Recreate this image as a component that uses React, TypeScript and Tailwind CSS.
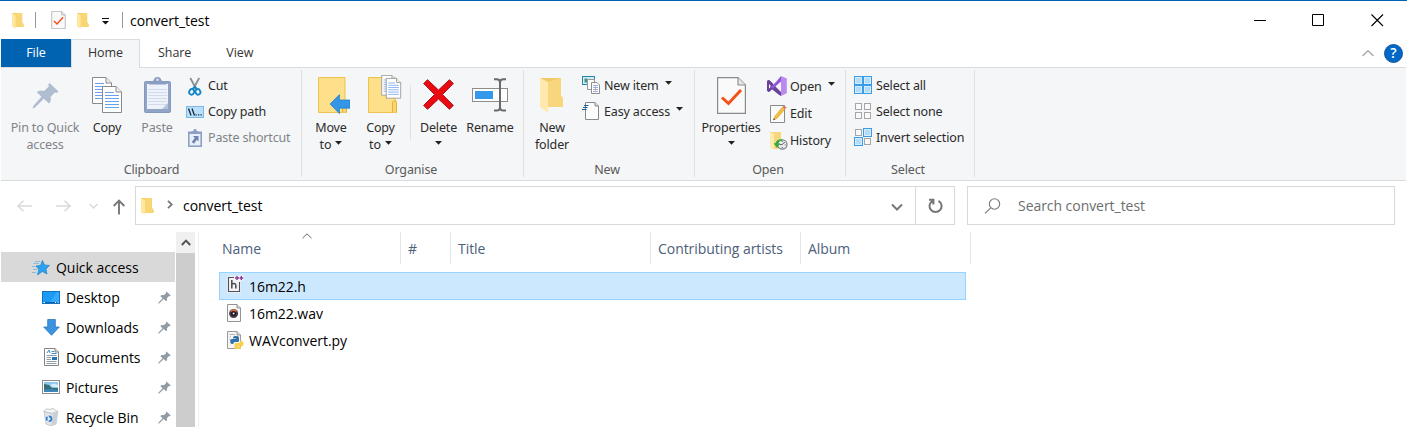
import React from "react";

type IconProps = { className?: string };

const Folder = ({ className = "" }: IconProps) => (
  <svg className={`shrink-0 ${className}`} viewBox="0 0 13 18">
    <path d="M0 1H11V11L12.5 13V16H4L0 14Z" fill="#f3c960" />
    <path d="M4 1H11V11L12.5 13V16H4Z" fill="#f8d675" />
    <path d="M0 1L4 3V17.6L0 15.5Z" fill="#ffe7a0" />
  </svg>
);

const CheckDoc = ({ className = "" }: IconProps) => (
  <svg className={`shrink-0 ${className}`} viewBox="0 0 29 37">
    <path d="M.6.6H21L28.4 8V36.4H.6Z" fill="#fafafa" stroke="#8b8b8b" strokeWidth="1.2" />
    <path d="M21 .6V8H28.4" fill="#e6e6e6" stroke="#8b8b8b" strokeWidth="1.1" />
    <path d="M5 20.5L11.5 26.5L24 13" fill="none" stroke="#f4511a" strokeWidth="3" />
  </svg>
);

const Pin = ({ className = "" }: IconProps) => (
  <svg className={`shrink-0 ${className}`} viewBox="0 0 27 27" fill="currentColor">
    <path d="M17.5 1L26.5 9.5L24.5 11L22.8 10.5L18.5 15C19.5 18 18.6 20 17 21.5L11.8 16.8L3 25.5L0.5 26.5L1.2 24L9.5 14.8L4.8 10.2C7 8.2 9.5 8 12 9L16.8 4.5L16.3 2.5Z" />
  </svg>
);

const Page = ({ x, y, stroke = "#8a8a8a" }: { x: number; y: number; stroke?: string }) => (
  <g transform={`translate(${x} ${y})`}>
    <path d="M.5.5H14L19.5 6V26.5H.5Z" fill="#fff" stroke={stroke} />
    <path d="M14 .5V6H19.5" fill="#eee" stroke={stroke} />
    <path d="M3 6.5H12M3 9.5H17M3 12.5H17M3 15.5H17M3 18.5H17M3 21.5H17" stroke="#6ba0ef" />
  </g>
);

const CopyIcon = () => (
  <svg className="h-9 w-[30px]" viewBox="0 0 30 36">
    <Page x={0} y={0} />
    <Page x={10} y={9} />
  </svg>
);

const PasteIcon = () => (
  <svg className="h-9 w-[27px]" viewBox="0 0 27 36">
    <rect x=".5" y="4.5" width="26" height="31" rx="1" fill="#92a4c6" stroke="#8598bd" />
    <path d="M3 7H24V32H3Z" fill="#eef2fa" />
    <path d="M4 12.5H23M4 15.5H23M4 18.5H23M4 21.5H23M4 24.5H23M4 27.5H23" stroke="#d3dbeb" />
    <path d="M18 32L24 26V32Z" fill="#b5c2da" />
    <path d="M5 7.5V5.5L9.5 3.5C10 1 11.5 0 13.5 0S17 1 17.5 3.5L22 5.5V7.5Z" fill="#8b9dc2" />
    <circle cx="13.5" cy="2.8" r="1.2" fill="#dfe6f2" />
  </svg>
);

const CutIcon = () => (
  <svg className="h-[19px] w-[14px] shrink-0" viewBox="0 0 14 19" fill="none">
    <path d="M2.3 1L8.5 12.5M11.2 1L5 12.5" stroke="#8d9299" strokeWidth="1.9" />
    <ellipse cx="3.7" cy="14.9" rx="2.4" ry="2.8" stroke="#1788c7" strokeWidth="2" transform="rotate(25 3.7 14.9)" />
    <ellipse cx="9.9" cy="14.9" rx="2.4" ry="2.8" stroke="#1788c7" strokeWidth="2" transform="rotate(-25 9.9 14.9)" />
    <path d="M4.5 12L6.8 9.8L9 12" stroke="#1788c7" strokeWidth="1.8" />
  </svg>
);

const PathIcon = () => (
  <svg className="h-3 w-[18px] shrink-0" viewBox="0 0 18 12">
    <rect x=".5" y=".5" width="17" height="11" fill="#b9e0fb" stroke="#7db9e4" />
    <path d="M2.5 2.5L5 9.5M6 2.5L8.5 9.5" stroke="#1a2a3a" strokeWidth="1.3" />
    <path d="M9.5 8.8H10.8M12 8.8H13.3M14.5 8.8H15.8" stroke="#1a2a3a" strokeWidth="1.3" />
  </svg>
);

const PasteShortcutIcon = () => (
  <svg className="h-[18px] w-[14px] shrink-0" viewBox="0 0 14 18">
    <rect x="0" y="2.5" width="14" height="15.5" fill="#8fa2c5" />
    <path d="M1.6 5H12.4V16.4H1.6Z" fill="#e9eef8" />
    <path d="M3 5V3L5.3 2C5.6.6 6.1 0 7 0S8.4.6 8.7 2L11 3V5Z" fill="#8b9dc2" />
    <path d="M5 7H10.5V12.5L8.7 10.8L6 14.8L3.8 13L6.8 8.9Z" fill="#6d82ad" />
  </svg>
);

const BigFolder = () => (
  <>
    <path d="M.5.5H27V23L28.5 24.5V35.5H.5Z" fill="#ffe08a" stroke="#ecc34c" />
    <path d="M24.5 35V25.5C24.5 23.5 28.5 23.5 28.5 25.5V35.5" fill="#f9d56f" stroke="#e2b336" />
  </>
);

const MoveIcon = () => (
  <svg className="h-[37px] w-8" viewBox="0 0 32 37">
    <BigFolder />
    <path d="M12 27L21.5 17.5V23H32V31.2H21.5V36.7Z" fill="#3596e8" stroke="#1f7ccb" strokeWidth=".7" />
  </svg>
);

const CopyToIcon = () => (
  <svg className="h-[39px] w-[34px]" viewBox="0 0 34 39">
    <g transform="translate(0 2)"><BigFolder /></g>
    <g transform="translate(13.3 0) scale(.76)">
      <Page x={0} y={0} />
      <Page x={6} y={4} />
    </g>
  </svg>
);

const DeleteIcon = () => (
  <svg className="h-[31px] w-[31px]" viewBox="0 0 31 31">
    <path d="M4.5.7L15.5 11L26.5.7L30.3 4.6L19.5 15.5L30.3 26.4L26.5 30.3L15.5 20L4.5 30.3L.7 26.4L11.5 15.5L.7 4.6Z" fill="#ea0b12" stroke="#a9121a" />
  </svg>
);

const RenameIcon = () => (
  <svg className="h-[34px] w-9" viewBox="0 0 36 34">
    <rect x=".5" y="10.5" width="35" height="13" fill="#fff" stroke="#8c8c8c" />
    <rect x="3" y="13" width="18" height="8" fill="#3499ea" />
    <path d="M22 1.2H24.5C27 1.2 28 2.6 28 4.5V29C28 31.3 27 32.6 24.5 32.6H22M34 1.2H31.5C29 1.2 28 2.6 28 4.5M34 32.6H31.5C29 32.6 28 31.3 28 29" fill="none" stroke="#6a6a6a" strokeWidth="2" />
  </svg>
);

const NewFolderIcon = () => (
  <svg className="h-[35px] w-6" viewBox="0 0 24 35">
    <path d="M0 0H21V18L23 20V29H6L0 20Z" fill="#f0ca6a" />
    <path d="M8 4L21 0V18L23 20V29H8Z" fill="#f8d67d" />
    <path d="M0 0L8 4V34.5L0 29Z" fill="#ffe9ad" />
  </svg>
);

const NewItemIcon = () => (
  <svg className="h-[18px] w-[18px] shrink-0" viewBox="0 0 18 18">
    <rect x=".5" y=".5" width="12" height="8" fill="#d3ecfb" stroke="#2c83ab" />
    <rect x="2.5" y="2.5" width="3" height="4" fill="#3f9777" />
    <path d="M5.5 3.5H12.5V13.5H5.5Z" fill="#fbfbfb" stroke="#9a9a9a" />
    <path d="M9.5 6.5H15L17.5 9V17.5H9.5Z" fill="#fff" stroke="#8f8f8f" />
    <path d="M11 9.5H16M11 11.5H16M11 13.5H16M11 15.5H16" stroke="#88b5ea" />
    <path d="M13.5 9V16" stroke="#df9a9a" strokeWidth=".8" />
  </svg>
);

const EasyIcon = () => (
  <svg className="h-[18px] w-[17px] shrink-0" viewBox="0 0 17 18">
    <path d="M3.5.5H13L16.5 4V17.5H3.5Z" fill="#fdfdfd" stroke="#8a8a8a" />
    <path d="M13 .5V4H16.5" fill="#ddd" stroke="#8a8a8a" />
    <path d="M2 3.5H6.5M1 5.5H5.5M0 7.5H4.5" stroke="#1e5f96" strokeWidth="1.1" />
  </svg>
);

const StudioIcon = () => (
  <svg className="h-5 w-5 shrink-0" viewBox="0 0 20 20">
    <path d="M0 5L2 4L14 16L14 20L11.5 18.5L3.5 12V8Z" fill="#6b4299" />
    <path d="M14 0L19.8 2.5V17.3L14 20Z" fill="#b98af0" />
    <path d="M14 0V5.5L2 16L0 14.8L9 6Z" fill="#9155d8" />
    <path d="M0 5L2 4L6 7.5L3.7 9.6L2 8V13L3.7 11L5.5 12.5L2 16L0 14.8Z" fill="#68419a" />
  </svg>
);

const EditIcon = () => (
  <svg className="h-[19px] w-[17px] shrink-0" viewBox="0 0 17 19">
    <path d="M.5 1.5H14.5V18.5H.5Z" fill="#fafafa" stroke="#8a8a8a" />
    <path d="M3.5 16L5 12L12.5 3L15 5L7.2 14.2Z" fill="#f5bd3a" stroke="#d8951d" strokeWidth=".5" />
    <path d="M12.5 3L14 1.3L16.7 3.4L15 5Z" fill="#d9766e" />
    <path d="M3.2 16.3L3.9 14.2L5.3 15.3Z" fill="#444" />
  </svg>
);

const HistoryIcon = () => (
  <svg className="h-[18px] w-[18px] shrink-0" viewBox="0 0 18 18">
    <path d="M0 0H11V12L8 17H3L0 15Z" fill="#f8d77e" />
    <path d="M0 0L4 2V17L0 15Z" fill="#ffebb0" />
    <circle cx="12.3" cy="12.5" r="4.7" fill="#e8ebec" stroke="#7d8587" strokeWidth="1.2" />
    <path d="M12.3 12.5L14.8 10M12.3 12.5H9.5M12.3 9V10M15.6 12.8H14.8M12.3 16V15" stroke="#555" strokeWidth=".9" />
    <path d="M12 7.2C8 6.8 5.8 9 5.6 11.3H3.6L7 16L10 11.3H8.3C8.5 9.5 9.8 8.5 12 9Z" fill="#2fae3c" />
  </svg>
);

const GridIcon = ({ on }: { on: boolean[] }) => {
  const all = on.every(Boolean);
  return (
    <svg className="h-[18px] w-[18px] shrink-0" viewBox="0 0 18 18">
      {all && <rect x=".5" y=".5" width="17" height="17" fill="#3a9ce8" stroke="#3a9ce8" />}
      {on.map((v, i) => {
        const x = (i % 2) * 9;
        const y = Math.floor(i / 2) * 9;
        return v ? (
          <g key={i}>
            <rect x={x + 0.5} y={y + 0.5} width="8" height="8" fill="#d5edfd" stroke="#3a9ce8" />
            <rect x={x + 2} y={y + 2} width="5" height="5" fill="#b4dcfa" />
          </g>
        ) : (
          <rect key={i} x={x + 1.5} y={y + 1.5} width="6" height="6" fill="#fafafa" stroke="#a6a6a6" />
        );
      })}
    </svg>
  );
};

const Caret = ({ className = "" }: IconProps) => (
  <svg className={`inline-block h-1 w-[7px] shrink-0 ${className}`} viewBox="0 0 7 4"><path d="M0 0H7L3.5 3.8Z" fill="#222" /></svg>
);

const T = ({ children }: { children: React.ReactNode }) => <span className="whitespace-pre">{children}</span>;

const Big = ({ w, icon, a, b, caret, muted }: { w: string; icon: React.ReactNode; a: string; b?: string; caret?: boolean; muted?: boolean }) => (
  <div className={`flex shrink-0 flex-col items-center ${w} ${muted ? "text-[#808489]" : "text-[#2b2b2b]"}`}>
    <div className="flex h-[51px] items-center pt-[3px]">{icon}</div>
    <div className="h-[17px] leading-[17px]"><T>{a}</T></div>
    <div className="flex h-[17px] items-center gap-1 leading-[17px]">{b && <T>{b}</T>}{caret && <Caret className="-mt-1" />}</div>
  </div>
);

const Small = ({ icon, label, caret, muted, wide }: { icon: React.ReactNode; label: string; caret?: boolean; muted?: boolean; wide?: boolean }) => (
  <div className={`flex h-[26px] items-center ${muted ? "text-[#808489]" : "text-[#2b2b2b]"}`}>
    <div className={`flex shrink-0 items-center ${wide ? "w-[23px]" : "w-[22px]"}`}>{icon}</div>
    <T>{label}</T>
    {caret && <Caret className="-mt-1.5 ml-[6px]" />}
  </div>
);

const Group = ({ w, title, shift = "", children }: { w: string; title: string; shift?: string; children: React.ReactNode }) => (
  <div className={`relative flex shrink-0 flex-col ${w}`}>
    <div className="flex h-[93px]">{children}</div>
    <div className={`text-center leading-[17px] text-[#5a5a5a] ${shift}`}><T>{title}</T></div>
    <div className="absolute right-0 top-0.5 h-[107px] w-px bg-[#e0e1e3]" />
  </div>
);

const StarIcon = () => (
  <svg className="h-[17px] w-[18px]" viewBox="0 0 18 17">
    <path d="M10.5 1.5L12.5 6L17.5 6.4L14 10L15 15L10.3 12.5L5.5 16L6.8 10.6L4 7L8.6 6.3Z" fill="#2ba2ef" stroke="#1879c1" strokeWidth=".6" />
    <path d="M3 2.5H8.5M1.5 4.5H7M0 7.5H3.5M1 10.5H5M0 13.5H4" stroke="#6fb5e2" strokeWidth=".8" />
  </svg>
);
const DesktopIcon = () => (
  <svg className="h-[13px] w-[18px]" viewBox="0 0 18 13">
    <rect x=".5" y=".5" width="17" height="12" fill="#1b9bf5" stroke="#1273c4" />
    <path d="M8 11L15 1H17V11Z" fill="#35aafa" />
    <path d="M1 11.5H17" stroke="#0f5ea3" /><path d="M1.5 11.5H3M13 11.5H14M15.5 11.5H16.5" stroke="#fff" />
  </svg>
);
const DownIcon = () => (
  <svg className="h-[17px] w-[17px]" viewBox="0 0 17 17"><path d="M4.7.5H12.3V8H16.3L8.5 16.3L.7 8H4.7Z" fill="#3c93e0" stroke="#2476c2" strokeWidth=".8" /></svg>
);
const DocIcon = () => (
  <svg className="h-[18px] w-[15px]" viewBox="0 0 15 18">
    <path d="M.5.5H11L14.5 4V17.5H.5Z" fill="#fff" stroke="#838383" /><path d="M11 .5V4H14.5" fill="#ddd" stroke="#838383" />
    <path d="M3 5L5 2L6 5M7.5 3.5H10M7.5 5.5H12.5" fill="none" stroke="#3992d2" />
    <path d="M2.5 7.5H12.5M2.5 9.5H7M2.5 11.5H7M2.5 13.5H12.5M2.5 15.5H12.5" stroke="#8b9aa5" /><rect x="8" y="9" width="5" height="3" fill="#2875ae" />
  </svg>
);
const PicIcon = () => (
  <svg className="h-3.5 w-[18px]" viewBox="0 0 18 14">
    <rect x=".5" y=".5" width="17" height="13" fill="#fff" stroke="#8b8b8b" /><rect x="2" y="2" width="14" height="10" fill="#8cc7f2" />
    <path d="M2 4L7 5L10 8H16V12H2Z" fill="#376c74" /><path d="M2 9.5L9 9L16 10V12H2Z" fill="#3d87bd" /><path d="M8 5L12 3.5L16 5V7H11Z" fill="#d8effb" />
  </svg>
);
const BinIcon = () => (
  <svg className="h-[18px] w-[16px]" viewBox="0 0 16 18">
    <path d="M1 3L14.8 3.8L13 16L8 17.8L3 16Z" fill="#e1e5e8" stroke="#b5bcc2" strokeWidth=".7" />
    <path d="M1 3L4 .8L7 1.5L10 .3L12 2L15 3.7L9.5 5.2L1.5 4Z" fill="#f5f6f7" stroke="#a8b0b6" strokeWidth=".7" />
    <path d="M9.5 5.2L8.5 17.5L13 16L14.7 4Z" fill="#cbd1d6" />
    <circle cx="6" cy="10.7" r="2.4" fill="none" stroke="#2c7fd0" strokeWidth="1.7" strokeDasharray="3.6 1.4" />
  </svg>
);

const side: [string, React.ReactNode][] = [
  ["Desktop", <DesktopIcon />], ["Downloads", <DownIcon />], ["Documents", <DocIcon />], ["Pictures", <PicIcon />], ["Recycle Bin", <BinIcon />],
];

const HIcon = () => (
  <svg className="mb-1 h-[18px] w-[17px]" viewBox="0 0 17 18">
    <path d="M1.5 2.5H12.5V16.5H1.5Z" fill="#f4f4f6" stroke="#f4f4f6" strokeWidth="2.4" />
    <path d="M12 .5H17V5.5H8V1.5Z" fill="#f4f4f6" />
    <path d="M7 2.5H1.5V16.5H12.5V7" fill="none" stroke="#505055" strokeWidth="1.1" />
    <path d="M4.8 5V13.5M4.8 9.6C6 8.2 8.8 8 8.8 10.3V13.5" fill="none" stroke="#505055" strokeWidth="1.6" />
    <path d="M10 1V5M8 3H12M14.3 1V5M12.5 3H16.3" stroke="#8a3c9c" strokeWidth="1.4" />
  </svg>
);
const WavIcon = () => (
  <svg className="mb-0.5 h-[18px] w-[14px]" viewBox="0 0 14 18">
    <path d="M.5.5H10L13.5 4V17.5H.5Z" fill="#fafafa" stroke="#939393" /><path d="M10 .5V4H13.5" fill="#ddd" stroke="#939393" />
    <circle cx="6.6" cy="9.5" r="4.5" fill="#4b3a4c" /><path d="M3 7A4.4 4.4 0 0 1 10 7L6.6 9.5Z" fill="#d9743f" /><circle cx="6.6" cy="9.5" r="2.6" fill="#1f1b22" /><circle cx="6.6" cy="9.5" r="1" fill="#e8e8e8" />
  </svg>
);
const PyIcon = () => (
  <svg className="mb-0.5 h-[18px] w-[17px]" viewBox="0 0 17 18">
    <path d="M.5.5H10L13.5 4V17.5H.5Z" fill="#f5f5f5" stroke="#9b9b9b" /><path d="M10 .5V4H13.5" fill="#ddd" stroke="#939393" />
    <path d="M2.5 3.5H8M2.5 6H4M2.5 8.5H3.5" stroke="#b5b5b5" />
    <path d="M6 7C6 5.5 7 5 9 5S12 5.5 12 7V9.5C12 10.5 11.3 11 10.5 11H8C6.8 11 6.3 11.8 6.3 13H5C3.7 13 3.2 11.7 3.2 10.3S3.8 8 5 8H9V7.5H6Z" fill="#3473a8" />
    <path d="M14 17C14 17.7 12.8 18 10.8 18S7.5 17.5 7.5 16.5V13.5C7.5 12.5 8.2 12 9 12H11.5C12.6 12 13.2 11.2 13.2 10H14.5C15.8 10 16.5 11.2 16.5 12.6S16 15.3 14.8 15.3H10.8V15.8H14Z" fill="#fbd24b" />
  </svg>
);

const Col = ({ w, label }: { w: string; label: string }) => (
  <div className={`flex h-8 shrink-0 items-center border-r border-[#e5e5e5] pl-[7px] ${w}`}><T>{label}</T></div>
);

export default function App() {
  return (
    <div className="flex h-[427px] w-[1407px] flex-col overflow-hidden border-t border-[#0063b1] bg-white font-['Open_Sans',sans-serif] text-[14px] tracking-[-0.05px] text-black">
      <header className="flex h-[38px] shrink-0 items-center pl-3">
        <Folder className="h-[17px] w-3" />
        <div className="ml-[11px] h-4 w-px bg-[#999]" />
        <CheckDoc className="ml-[15px] h-[18px] w-[15px]" />
        <Folder className="ml-[11px] h-[17px] w-3" />
        <svg className="ml-[13px] mt-0.5 h-2 w-[7px]" viewBox="0 0 7 8"><path d="M0 1.5H7" stroke="#111" /><path d="M0 4H7L3.5 7.5Z" fill="#111" /></svg>
        <div className="ml-[13px] h-4 w-px bg-[#999]" />
        <div className="ml-[7px]"><T>convert_test</T></div>
        <svg className="ml-auto mr-[23px] h-[13px] w-[130px]" viewBox="0 0 130 13" fill="none" stroke="#000"><path d="M0 6.5H12" /><path d="M58.5.5H69.5V11.5H58.5Z" /><path d="M117.5.5L129 12M129 .5L117.5 12" strokeWidth="1.1" /></svg>
      </header>

      <nav className="flex h-7 shrink-0 pl-px text-[12.5px] text-[#333]">
        <div className="flex w-[70px] items-center justify-center bg-[#0063b1] text-white"><T>File</T></div>
        <div className="relative z-10 -mb-px flex w-[69px] items-center justify-center border border-b-0 border-[#dadbdc] bg-[#f5f6f7] pb-px"><T>Home</T></div>
        <div className="flex items-center pl-[18px]"><T>Share</T></div>
        <div className="flex items-center pl-[35px]"><T>View</T></div>
        <div className="ml-auto flex items-center pr-1">
          <svg className="mr-2.5 h-[7px] w-3" viewBox="0 0 12 7" fill="none" stroke="#a5a5a5" strokeWidth="1.3"><path d="M.5 6L6 .8L11.5 6" /></svg>
          <div className="flex size-[19px] items-center justify-center rounded-full border border-[#1459a0] bg-[#0067c6] text-[14px] font-semibold leading-none text-white">?</div>
        </div>
      </nav>

      <section className="mx-px flex h-[114px] shrink-0 border-y border-[#dadbdc] bg-[#f5f6f7] font-['Noto_Sans',sans-serif] text-[12.5px] tracking-[-0.15px]">
        <Group w="w-[301px]" title="Clipboard">
          <div className="w-1" />
          <Big w="w-[80px]" icon={<Pin className="size-[27px] text-[#b0bdd1]" />} a="Pin to Quick" b="access" muted />
          <Big w="w-[44px]" icon={<CopyIcon />} a="Copy" />
          <div className="w-[5px]" />
          <Big w="w-[46px]" icon={<PasteIcon />} a="Paste" muted />
          <div className="ml-[6px] pt-[5px]">
            <Small icon={<div className="pl-0.5"><CutIcon /></div>} label="Cut" />
            <Small icon={<PathIcon />} label="Copy path" />
            <Small icon={<div className="pl-0.5"><PasteShortcutIcon /></div>} label="Paste shortcut" muted />
          </div>
        </Group>
        <Group w="w-[222px]" title="Organise" shift="pr-1">
          <Big w="w-[58px]" icon={<div className="pl-1.5"><MoveIcon /></div>} a="Move" b="to" caret />
          <Big w="w-[41px]" icon={<div className="pb-0.5 pl-2"><CopyToIcon /></div>} a="Copy" b="to" caret />
          <div className="ml-[9px] mt-[17px] h-[55px] w-px bg-[#e0e1e3]" />
          <div className="w-1" />
          <Big w="w-[47px]" icon={<div className="pb-px"><DeleteIcon /></div>} a="Delete" caret />
          <Big w="w-[56px]" icon={<div className="pb-px"><RenameIcon /></div>} a="Rename" />
        </Group>
        <Group w="w-[171px]" title="New" shift="pr-[5px]">
          <Big w="w-[56px]" icon={<NewFolderIcon />} a="New" b="folder" />
          <div className="ml-0.5 pt-[5px]">
            <Small icon={<div className="pb-0.5"><NewItemIcon /></div>} label="New item" caret />
            <Small icon={<div className="pb-0.5"><EasyIcon /></div>} label="Easy access" caret />
          </div>
        </Group>
        <Group w="w-[151px]" title="Open" shift="pr-[5px]">
          <Big w="w-[72px]" icon={<CheckDoc className="h-[37px] w-[29px]" />} a="Properties" caret />
          <div className="flex flex-col gap-px pt-[6px]">
            <Small wide icon={<div className="pb-0.5"><StudioIcon /></div>} label="Open" caret />
            <Small wide icon={<div className="pb-px pl-[3px]"><EditIcon /></div>} label="Edit" />
            <Small wide icon={<div className="pl-[3px]"><HistoryIcon /></div>} label="History" />
          </div>
        </Group>
        <Group w="w-[129px]" title="Select" shift="pr-[5px]">
          <div className="ml-2 pt-[5px]">
            <Small icon={<div className="pb-0.5"><GridIcon on={[true, true, true, true]} /></div>} label="Select all" />
            <Small icon={<div className="pb-0.5"><GridIcon on={[false, false, false, false]} /></div>} label="Select none" />
            <Small icon={<div className="pb-0.5"><GridIcon on={[false, true, true, false]} /></div>} label="Invert selection" />
          </div>
        </Group>
      </section>

      <section className="flex h-[51px] shrink-0 pt-[5px]">
        <div className="flex h-[39px] w-[135px] shrink-0 items-center pl-[17px]">
          <svg className="h-[18px] w-[108px]" viewBox="0 0 108 18" fill="none" strokeWidth="1.5">
            <path d="M15 9H.8M6.5 3.8L.8 9L6.5 14.2M39 9H53.2M47.5 3.8L53.2 9L47.5 14.2M72.5 7L76.5 11L80.5 7" stroke="#d9d9d9" />
            <path d="M102 17.5V3.5M96.7 9L102 3.5L107.3 9" stroke="#777" strokeWidth="1.9" />
          </svg>
        </div>
        <div className="flex h-[39px] w-[820px] items-center border border-[#d9d9d9] pl-[5px]">
          <Folder className="h-[18px] w-[13px]" />
          <svg className="mb-0.5 ml-[13px] h-[9px] w-[6px]" viewBox="0 0 6 9" fill="none" stroke="#777" strokeWidth="1.8"><path d="M1 .8L4.8 4.5L1 8.2" /></svg>
          <div className="ml-[10px]"><T>convert_test</T></div>
          <div className="ml-auto flex h-full w-[98px] items-center">
            <svg className="ml-[35px] mt-1 h-[9px] w-3" viewBox="0 0 12 9" fill="none" stroke="#777" strokeWidth="2"><path d="M1 1.5L6 6.5L11 1.5" /></svg>
            <div className="ml-auto flex h-full w-[39px] items-center justify-center border-l border-[#d9d9d9]">
              <svg className="h-4 w-[15px]" viewBox="0 0 15 16" fill="none" stroke="#777" strokeWidth="2"><path d="M10.5 2.8A6 6 0 1 1 4.6 2.8M1 1.8H5.4V6.5" /></svg>
            </div>
          </div>
        </div>
        <div className="ml-3 flex h-[39px] w-[428px] items-center border border-[#d9d9d9] pl-4 text-[#6d6d6d]">
          <svg className="h-4 w-[17px]" viewBox="0 0 17 16" fill="none" stroke="#777" strokeWidth="1.1"><circle cx="10.5" cy="6" r="5.2" /><path d="M6.7 9.8L1 15.3" /></svg>
          <div className="ml-[17px]"><T>Search convert_test</T></div>
        </div>
      </section>

      <main className="flex min-h-0 flex-1">
        <aside className="flex w-[176px] shrink-0 flex-col pl-px pt-5">
          <div className="flex h-[30px] w-[174px] shrink-0 items-center bg-[#d9d9d9] pl-[31px]"><StarIcon /><div className="ml-1.5"><T>Quick access</T></div></div>
          {side.map(([n, i]) => (
            <div key={n} className="flex h-[30px] shrink-0 items-center pl-[41px]">
              <div className="flex w-6 shrink-0 items-center"><div className="flex w-[18px] justify-center">{i}</div></div>
              <T>{n}</T>
              <Pin className="ml-auto mr-[5px] size-[13px] text-[#919ba3]" />
            </div>
          ))}
        </aside>
        <div className="flex w-[19px] shrink-0 flex-col bg-[#cdcdcd]">
          <div className="flex h-[21px] items-center justify-center bg-[#f0f0f0]"><svg className="h-[7px] w-[10px]" viewBox="0 0 10 7" fill="none" stroke="#555" strokeWidth="2"><path d="M.8 6L5 1.6L9.2 6" /></svg></div>
        </div>
        <div className="ml-[3px] w-px bg-[#f0f0f0]" />
        <div className="flex-1">
          <div className="flex text-[#4c607a]">
            <div className="relative flex h-8 w-[202px] shrink-0 items-center border-r border-[#e5e5e5] pl-[23px]"><T>Name</T>
              <svg className="absolute left-[103px] top-px h-[6px] w-[10px]" viewBox="0 0 10 6" fill="none" stroke="#666"><path d="M.5 5.2L5 .8L9.5 5.2" /></svg>
            </div>
            <Col w="w-[50px]" label="#" /><Col w="w-[200px]" label="Title" /><Col w="w-[150px]" label="Contributing artists" /><Col w="w-[170px]" label="Album" />
          </div>
          <div className="ml-5 mt-2 flex w-[747px] flex-col">
            <div className="flex h-7 items-center border border-[#99d1ff] bg-[#cce8ff] pl-[7px]"><div className="w-[22px]"><HIcon /></div><T>16m22.h</T></div>
            <div className="flex h-[27px] items-center pl-2"><div className="w-[22px]"><WavIcon /></div><T>16m22.wav</T></div>
            <div className="flex h-[27px] items-center pl-2"><div className="w-[22px]"><PyIcon /></div><T>WAVconvert.py</T></div>
          </div>
        </div>
      </main>
    </div>
  );
}
